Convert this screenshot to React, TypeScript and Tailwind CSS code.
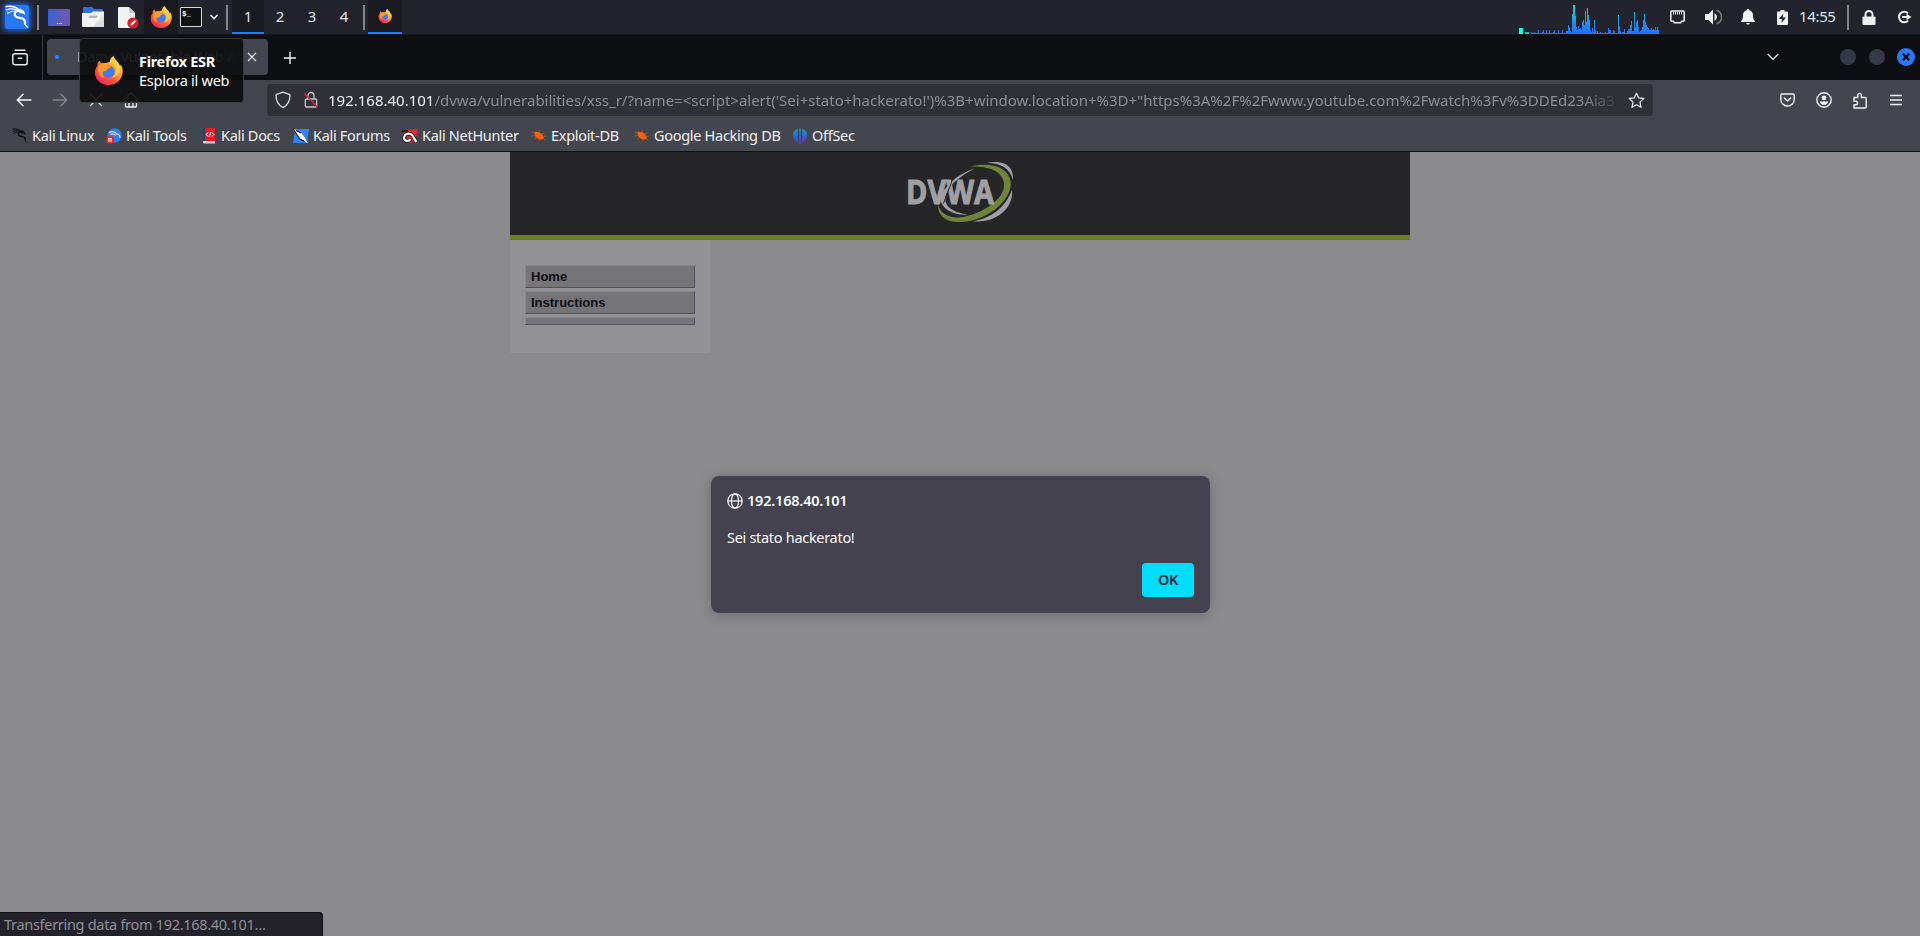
import React from "react";

function FirefoxLogo({ className, id }: { className: string; id: string }) {
  return (
    <svg viewBox="0 0 32 32" className={className}>
      <defs>
        <linearGradient id={id + "a"} x1="0.85" y1="0.1" x2="0.2" y2="0.95">
          <stop offset="0" stopColor="#ffe14d" />
          <stop offset="0.35" stopColor="#ffa436" />
          <stop offset="0.65" stopColor="#ff5a3c" />
          <stop offset="1" stopColor="#f0245e" />
        </linearGradient>
      </defs>
      <path
        d="M4.2 7.2c-.4 1-.5 2.400-.3 3.400C1.500 13.500.6 17 1.300 20.600 2.700 27.300 8.800 32 16 32c8.600 0 15.500-6.600 15.700-15 .1-3.400-1-6-2.700-8 .1 1.200.1 1.700-.2 2.400-.9-3.600-2.600-4.900-4.500-6.800C22.600 3 21.700 1.500 21.500 0c-2.700 1.700-3.800 4.400-4 6.600-1.400.1-2.700.5-3.800 1.100-2.300-.2-4.200-.1-5.400.7-1-.6-1.500-1.700-1.600-3.200-.9.5-1.800 1.100-2.500 2z"
        fill={`url(#${id}a)`}
      />
      <path
        d="M21.500 0c-2.700 1.700-3.800 4.400-4 6.600 3.800.5 6.600 3.600 6.800 7.600.2 5-2.300 8-4.600 9.600 5.500-.9 8.600-4.200 9.100-9.400.2-4.300-2.100-7.300-4.500-9.800C22.600 3 21.700 1.500 21.500 0z"
        fill="#ffd44a"
        opacity="0.75"
      />
      <circle cx="16.300" cy="17" r="6.600" fill="#4479e6" />
      <path
        d="M8.300 8.400c2-.9 4.600-.5 6.300 1 .6.600 2 1.700 4 1.900-.3 2-2.700 2.200-3.700 2.900-1 .8-.6 2.200-2.300 2.500-1 .2-2-.1-2.900.6-1 2.900-.1 5.300 2.300 7.100-4.300-.7-7.500-3.700-7.600-8.400 0-3 .9-5.500 3.900-7.600z"
        fill="#ff9a2e"
      />
    </svg>
  );
}

function KaliDragon({ className }: { className: string }) {
  return (
    <svg viewBox="0 0 24 24" fill="none" stroke="currentColor" strokeLinecap="round" strokeLinejoin="round" className={className}>
      <path d="M1.200 1.600C6 .8 11 2 15.200 5.400" strokeWidth="1.500" />
      <path d="M1.500 4.800C5 3.600 10 3.800 14 5.600" strokeWidth="1.300" />
      <path d="M2.500 8.300C5 6.600 9 5.600 12.500 5.800" strokeWidth="1.100" />
      <path d="M15.500 4.200l2.800 1.600 1.700 3.400-2.600-1.200-2.600-.4-2.300-1.600z" fill="currentColor" strokeWidth="0.800" />
      <path d="M12.500 6C9.300 6.600 8.700 10 11.300 11.800c2 1.400 4.600.9 6.700 2 2.200 1.100 2.200 3.600 2 5.200" strokeWidth="2.200" />
      <path d="M20 18c.2 2 1.200 3.400 2.800 4.300" strokeWidth="1.200" />
    </svg>
  );
}

function PanelDivider({ className }: { className: string }) {
  return (
    <div className={`flex items-center justify-center ${className}`}>
      <div className="h-[25px] w-0.5 bg-[#858589]" />
    </div>
  );
}

const load = [
  2, 1, 1, 2, 1, 1, 1, 4, 1, 1, 1, 2, 4, 1, 1, 4, 1, 1, 4, 1, 1, 1, 2, 4, 1, 1, 1, 4, 1, 1, 1, 4, 1, 1, 1, 3, 3, 9, 7, 3, 2, 20,
  29, 29, 18, 7, 4, 8, 5, 6, 4, 12, 14, 9, 23, 12, 26, 19, 14, 4, 2, 6, 2, 14, 4, 1, 3, 1, 1, 2, 1, 1, 1, 1, 2, 1, 1, 6, 4, 4, 1, 1, 4,
  3, 1, 1, 1, 19, 8, 3, 1, 2, 2, 5, 1, 1, 3, 5, 5, 9, 13, 3, 3, 22, 7, 12, 14, 7, 2, 3, 4, 7, 14, 20, 12, 9, 7, 6, 4, 4, 6, 4, 5,
  4, 7, 4, 7, 4,
];

function LoadGraph() {
  return (
    <svg width="140" height="34" viewBox="0 0 140 34" shapeRendering="crispEdges">
      <defs>
        <linearGradient id="load" gradientUnits="userSpaceOnUse" x1="0" y1="4" x2="0" y2="34">
          <stop offset="0" stopColor="#12e0e0" />
          <stop offset="0.6" stopColor="#1c93f0" />
          <stop offset="1" stopColor="#2a6cfa" />
        </linearGradient>
      </defs>
      <rect x="0" y="28" width="4" height="6" fill="#0fffe0" />
      <rect x="6" y="32" width="4" height="2" fill="#0bcfa8" />
      {load.map((h, i) => (
        <rect key={i} x={12 + i} y={34 - h} width="1" height={h} fill="url(#load)" />
      ))}
    </svg>
  );
}

function Panel() {
  return (
    <header className="flex h-[35px] shrink-0 items-stretch border-b border-[#17181d] bg-[#22232c] text-[15px] text-[#dfe3ea]">
      <div className="flex w-[33px] items-center justify-center">
        <div className="flex size-6 items-center justify-center rounded-[3px] bg-[#2678f5] shadow-[0_0_5px_2px_#1c5fd0]">
          <KaliDragon className="size-6 text-white" />
        </div>
      </div>
      <PanelDivider className="w-[9px]" />
      <div className="flex w-[34px] items-center justify-center">
        <div className="flex h-[17px] w-[22px] items-end justify-center gap-px rounded-[1px] bg-gradient-to-r from-[#3563cf] to-[#7254b4] pb-0.5">
          <div className="size-px bg-white" />
          <div className="size-px bg-white" />
          <div className="size-px bg-white" />
        </div>
      </div>
      <div className="flex w-[34px] items-center justify-center">
        <svg width="22" height="20" viewBox="0 0 22 20">
          <path d="M1 1a1 1 0 0 1 1-1h8l2 2h8a1 1 0 0 1 1 1v4H1z" fill="#2f70e0" />
          <path d="M0 6h9l2-1.500h11V19a1 1 0 0 1-1 1H1a1 1 0 0 1-1-1z" fill="#f2f2f2" />
          <path d="M22 7v12a1 1 0 0 1-1 1H11z" fill="#dedede" />
          <rect x="6.500" y="8.500" width="9" height="2.500" rx="1.200" fill="#b8b8b8" />
        </svg>
      </div>
      <div className="flex w-[34px] items-center justify-center pl-[3px]">
        <svg width="21" height="23" viewBox="0 0 21 23">
          <path d="M0 2a1 1 0 0 1 1-1h10l6 6v15H1a1 1 0 0 1-1-1z" fill="#f2f2f2" />
          <path d="M11 1v6h6z" fill="#c9c9c9" />
          <circle cx="15" cy="17" r="5.600" fill="#d3202a" />
          <path d="M12.500 19.500l.6-1.900 3.700-3.700 1.300 1.300-3.700 3.700z" fill="#fff" />
        </svg>
      </div>
      <div className="flex w-[34px] items-center justify-center bg-[#191a1f]">
        <FirefoxLogo id="dock" className="size-[22px]" />
      </div>
      <div className="flex w-[26px] items-center justify-center">
        <div className="h-5 w-[22px] rounded-[1px] border border-[#d8d8d8] bg-[#101112] pl-px font-['Liberation_Mono'] text-[7.500px]/[12px] font-bold text-white">
          $_
        </div>
      </div>
      <div className="flex w-[19px] items-center justify-center">
        <svg width="10" height="6" viewBox="0 0 10 6" fill="none" stroke="#e8e8ea" strokeWidth="1.700">
          <path d="M1.500 1L5 4.500 8.500 1" />
        </svg>
      </div>
      <PanelDivider className="w-[9px] pr-px" />
      <div className="flex w-8 items-center justify-center border-b-2 border-[#2777ff] bg-[#191b21] pt-px">1</div>
      <div className="flex w-8 items-center justify-center pb-px">2</div>
      <div className="flex w-8 items-center justify-center pb-px">3</div>
      <div className="flex w-8 items-center justify-center pb-px">4</div>
      <PanelDivider className="w-2" />
      <div className="flex w-[34px] items-center justify-center border-b-2 border-[#2777ff] bg-[#191b21]">
        <FirefoxLogo id="task" className="size-[14px]" />
      </div>
      <div className="flex-1" />
      <LoadGraph />
      <div className="ml-px flex w-[35px] items-center justify-center">
        <svg width="15" height="14" viewBox="0 0 15 14" fill="none" stroke="#ededed">
          <path d="M1.800 1h11.400a1 1 0 0 1 1 1v8.200a1 1 0 0 1-1 1h-1.700l-.8 1.600H4.300l-.8-1.600H1.800a1 1 0 0 1-1-1V2a1 1 0 0 1 1-1z" strokeWidth="1.600" />
          <path d="M3.500 2v2.500M5.500 2v2.500M7.500 2v2.500M9.500 2v2.500M11.500 2v2.500" />
        </svg>
      </div>
      <div className="flex w-[35px] items-center justify-center pl-px">
        <svg width="17" height="16" viewBox="0 0 17 16" fill="none">
          <path d="M0 5h3.500L8 .5v15L3.500 11H0z" fill="#f0f0f0" />
          <path d="M9.500 4a4.500 4.500 0 0 1 0 8z" fill="#f0f0f0" />
          <path d="M11.500 1.300a7 7 0 0 1 0 13.400" stroke="#77787e" strokeWidth="1.500" />
        </svg>
      </div>
      <div className="flex w-[35px] items-center justify-center">
        <svg width="14" height="16" viewBox="0 0 14 16" fill="#f0f0f0">
          <path d="M7 0c.9 0 1.400.6 1.400 1.300C11 2 12 4.200 12 6.500c0 3 .7 4.500 2 5.500v1H0v-1c1.300-1 2-2.500 2-5.500C2 4.200 3 2 5.600 1.300 5.600.6 6.100 0 7 0zM5.200 14h3.600c-.2 1-.9 1.600-1.800 1.600S5.400 15 5.200 14z" />
        </svg>
      </div>
      <div className="flex w-[34px] items-center justify-center">
        <svg width="11" height="15" viewBox="0 0 11 15">
          <path d="M3.500 0h4v1.500H10a1 1 0 0 1 1 1V14a1 1 0 0 1-1 1H1a1 1 0 0 1-1-1V2.500a1 1 0 0 1 1-1h2.500z" fill="#f0f0f0" />
          <path d="M6.300 3.500L2 9h3l-.5 4L9 7.500H5.800z" fill="#22232c" />
        </svg>
      </div>
      <div className="flex w-10 items-center pb-px tracking-[-0.35px]">14:55</div>
      <PanelDivider className="w-[17px]" />
      <div className="flex w-[26px] items-center justify-center">
        <svg width="14" height="15" viewBox="0 0 14 15">
          <rect x="0.500" y="6.500" width="13" height="8.500" rx="1" fill="#f0f0f0" />
          <path d="M3.500 7V4.500a3.500 3.500 0 0 1 7 0V7" fill="none" stroke="#f0f0f0" strokeWidth="2" />
        </svg>
      </div>
      <div className="flex w-[38px] items-center justify-center pl-1.5">
        <svg width="15" height="14" viewBox="0 0 15 14" fill="none" stroke="#f0f0f0" strokeWidth="2">
          <path d="M11 3.200A5.300 5.300 0 1 0 11 10.800M5 7h6" />
          <path d="M9.500 3.700L14.500 7l-5 3.300z" fill="#f0f0f0" stroke="none" />
        </svg>
      </div>
    </header>
  );
}

function TabBar() {
  return (
    <div className="flex h-[45px] shrink-0 bg-[#0e0f13]">
      <div className="flex w-[43px] items-center border-r border-[#3a3b42] pl-3">
        <svg width="16" height="17" viewBox="0 0 16 17" fill="none" stroke="#f0f0f2" strokeWidth="1.400" strokeLinecap="round" className="mb-px">
          <path d="M3 1.200h10" />
          <path d="M2.800 4.700h10.400a2 2 0 0 1 2 2v7a2 2 0 0 1-2 2H2.800a2 2 0 0 1-2-2v-7a2 2 0 0 1 2-2z" />
          <path d="M6.300 9.300h3.400" />
        </svg>
      </div>
      <div className="mt-1 ml-1 flex h-9 w-[221px] items-center rounded bg-[#44464f] pl-2">
        <div className="size-1 rounded-full bg-[#1a8bff]" />
        <div className="ml-[18px] w-[164px] overflow-hidden text-[14.500px] tracking-[-0.3px] whitespace-nowrap text-[#c9cace] [mask-image:linear-gradient(to_left,transparent,black_24px)]">
          Damn Vulnerable Web App
        </div>
        <svg width="10" height="10" viewBox="0 0 10 10" stroke="#e8e8ec" strokeWidth="1.200" className="ml-[6px]">
          <path d="M1 1l8 8M9 1l-8 8" />
        </svg>
      </div>
      <svg width="14" height="14" viewBox="0 0 14 14" stroke="#f4f4f6" strokeWidth="1.400" className="mt-4 ml-[15px]">
        <path d="M7 1v12M1 7h12" />
      </svg>
      <div className="flex-1" />
      <div className="flex items-start pt-[13px]">
        <svg width="12" height="8" viewBox="0 0 12 8" fill="none" stroke="#e8e8ec" strokeWidth="1.300" className="mt-[5px]">
          <path d="M.7 1L6 6.300 11.300 1" />
        </svg>
        <div className="mt-px ml-[61px] size-4 rounded-full bg-[#363a47]" />
        <div className="mt-px ml-[13px] size-4 rounded-full bg-[#363a47]" />
        <div className="mr-[5px] ml-3 flex size-[18px] items-center justify-center rounded-full bg-[#2777ff]">
          <svg width="8" height="8" viewBox="0 0 8 8" stroke="#0b0c10" strokeWidth="2.200">
            <path d="M.8.8l6.400 6.400M7.200.8L.8 7.200" />
          </svg>
        </div>
      </div>
    </div>
  );
}

function NavBar() {
  return (
    <div className="flex h-10 shrink-0 items-center">
      <div className="flex w-[267px] items-center pl-4">
        <svg width="16" height="14" viewBox="0 0 16 14" fill="none" stroke="#f4f4f6" strokeWidth="1.400" strokeLinecap="round">
          <path d="M15 7H1.500M7 1.300L1.300 7 7 12.700" />
        </svg>
        <svg width="16" height="14" viewBox="0 0 16 14" fill="none" stroke="#86878d" strokeWidth="1.400" strokeLinecap="round" className="ml-5">
          <path d="M1 7h13.500M9 1.300L14.700 7 9 12.700" />
        </svg>
        <svg width="14" height="14" viewBox="0 0 14 14" fill="none" stroke="#f4f4f6" strokeWidth="1.300" className="ml-[21px]">
          <path d="M1 1l12 12M13 1L1 13" />
        </svg>
        <svg width="16" height="16" viewBox="0 0 16 16" fill="none" stroke="#f4f4f6" strokeWidth="1.300" className="ml-[20px]">
          <path d="M1 7.500L8 1l7 6.500M2.500 6.500V14a1 1 0 0 0 1 1h9a1 1 0 0 0 1-1V6.500M6 15v-4a1 1 0 0 1 1-1h2a1 1 0 0 1 1 1v4" />
        </svg>
      </div>
      <div className="flex h-8 w-[1386px] items-center rounded bg-[#303136] pl-2">
        <svg width="16" height="18" viewBox="0 0 16 18" fill="none" stroke="#dcdcdf" strokeWidth="1.300" strokeLinejoin="round">
          <path d="M8 1.200l6.300 2.200c.5.200.7.500.7.900 0 5.400-2.600 10-7 12.300C3.600 14.300 1 9.700 1 4.300c0-.4.200-.7.700-.9z" />
        </svg>
        <svg width="16" height="18" viewBox="0 0 16 18" fill="none" className="ml-3">
          <path d="M3.500 8h9a1.200 1.200 0 0 1 1.200 1.200v5.600a1.200 1.200 0 0 1-1.200 1.200h-9a1.200 1.200 0 0 1-1.200-1.200V9.200A1.200 1.200 0 0 1 3.500 8zM5 8V4.500a3 3 0 0 1 6 0V8" stroke="#c8c8cc" strokeWidth="1.300" />
          <path d="M1.500 2.500l13 13.500" stroke="#e22850" strokeWidth="1.400" />
        </svg>
        <div className="ml-[9px] w-[1293px] overflow-hidden text-[15px] tracking-[-0.003px] whitespace-nowrap text-[#8d8e93] [mask-image:linear-gradient(to_left,transparent,black_40px)]">
          <span className="text-[#f2f2f4]">192.168.40.101</span>
          {"/dvwa/vulnerabilities/xss_r/?name=<script>alert('Sei+stato+hackerato!')%3B+window.location+%3D+\"https%3A%2F%2Fwww.youtube.com%2Fwatch%3Fv%3DDEd23Aia3"}
        </div>
        <svg width="17" height="17" viewBox="0 0 17 17" fill="none" stroke="#e4e4e7" strokeWidth="1.300" strokeLinejoin="round" className="ml-[7px]">
          <path d="M8.500 1.200l2.200 4.700 5 .6-3.700 3.600 1 5.200-4.500-2.600L4 15.300l1-5.200L1.300 6.500l5-.6z" />
        </svg>
      </div>
      <div className="flex flex-1 items-center justify-end pr-[17px]">
        <svg width="15" height="14" viewBox="0 0 15 14" fill="none" stroke="#f0f0f2" strokeWidth="1.400" strokeLinecap="round" strokeLinejoin="round">
          <path d="M2 1h11a1.200 1.200 0 0 1 1.200 1.200v4A6.600 6.600 0 0 1 7.500 13 6.600 6.600 0 0 1 .8 6.200v-4A1.200 1.200 0 0 1 2 1zM4.300 5l3.200 3 3.200-3" />
        </svg>
        <svg width="16" height="16" viewBox="0 0 16 16" fill="none" className="ml-[21px]">
          <circle cx="8" cy="8" r="7.200" stroke="#f0f0f2" strokeWidth="1.400" />
          <circle cx="8" cy="5.800" r="2.400" fill="#f0f0f2" />
          <path d="M3.800 9.500h8.400c-.5 2.200-2 3.500-4.200 3.500s-3.700-1.300-4.200-3.500z" fill="#f0f0f2" />
        </svg>
        <svg width="16" height="17" viewBox="0 0 16 17" fill="none" stroke="#f0f0f2" strokeWidth="1.400" strokeLinejoin="round" className="ml-5">
          <path d="M2 5.500h3.800V3.200a1.800 1.800 0 0 1 3.600 0v2.300h3.800a1 1 0 0 1 1 1V15a1 1 0 0 1-1 1H2v-3.200h1.800a1.700 1.700 0 0 0 0-3.600H2z" />
        </svg>
        <svg width="14" height="12" viewBox="0 0 14 12" stroke="#f0f0f2" strokeWidth="1.300" className="ml-[21px]">
          <path d="M1 1.500h12M1 6h12M1 10.500h12" />
        </svg>
      </div>
    </div>
  );
}

function Bug() {
  return (
    <svg width="16" height="16" viewBox="0 0 16 16">
      <path d="M4 3.800c2.500-.6 5.500.4 7 2.400 1.500 2 2.300 3.900 1.500 4.600-1.500 1.200-5 .8-7-1C3.700 8 2.700 5 4 3.800z" fill="#f0620f" />
      <path d="M4 5L1 4.500M4 7.500L.5 8M5.500 9.500L3 11M8 4l.5-2M11 6l2.500-1M12 8.500l3.500-.5M9 11l-.5 2M12.300 10.500l1.700 1.700" stroke="#b9541c" strokeWidth="0.900" />
    </svg>
  );
}

const bookmarks = [
  {
    label: "Kali Linux",
    width: "w-[94px]",
    icon: <KaliDragon className="size-4 text-[#0c0c0e]" />,
  },
  {
    label: "Kali Tools",
    width: "w-[95px]",
    icon: (
      <svg width="16" height="16" viewBox="0 0 16 16" fill="none">
        <circle cx="8.500" cy="7.500" r="7.200" fill="#2f7bef" />
        <path d="M3 4.500c3-1.700 7-.8 7.500 1.500 2.500 0 3.500 1.800 3.500 4M4.500 6.500c2-1 4-.5 5 1" stroke="#dfeaff" strokeWidth="1.200" />
        <circle cx="4" cy="11.700" r="4" fill="#e02a30" />
        <path d="M2 10.500h4M3 10.500V14M5 10.500V14" stroke="#fff" />
      </svg>
    ),
  },
  {
    label: "Kali Docs",
    width: "w-[92px]",
    icon: (
      <svg width="16" height="16" viewBox="0 0 16 16" fill="none">
        <path d="M2 1.500A1.500 1.500 0 0 1 3.500 0H14v13H2z" fill="#e01b22" />
        <path d="M2 1.500A1.500 1.500 0 0 1 3.500 0H4v13H2z" fill="#283a80" />
        <path d="M2 13h12v2.500H3.500A1.500 1.500 0 0 1 2 14z" fill="#d9cfcf" />
        <path d="M7 4.500L5.200 6.500 7 8.500M11 4.500l1.800 2L11 8.500M9.700 4L8.300 9" stroke="#fff" />
      </svg>
    ),
  },
  {
    label: "Kali Forums",
    width: "w-[109px]",
    icon: (
      <svg width="16" height="16" viewBox="0 0 16 16">
        <path d="M2 1h14l-2 14H0z" fill="#2a84f5" />
        <path d="M1 1l4.500 2.500 3 1.500 3.500 5 3 5.500-4.500-3-4-1.500-2.500-4z" fill="#fff" />
        <path d="M0 .5l4.500 7 2.500 3.500 4.500 2.500M3 2.500L8 5" stroke="#15161a" strokeWidth="1.100" fill="none" />
      </svg>
    ),
  },
  {
    label: "Kali NetHunter",
    width: "w-[129px]",
    icon: (
      <svg width="16" height="16" viewBox="0 0 16 16">
        <path d="M2 2l14-1-3 13-6 1z" fill="#e5252e" />
        <path d="M0 3h6" stroke="#111" strokeWidth="1.500" />
        <path d="M2 9.500C2.500 6 6 5 8.500 6c3 1.200 3.500 5 6 8M2 9.500c0 4 5 4.500 6.500 1.500" stroke="#111" strokeWidth="3.800" fill="none" />
        <path d="M2 9.500C2.500 6 6 5 8.500 6c3 1.200 3.500 5 6 8M2 9.500c0 4 5 4.500 6.500 1.500" stroke="#fff" strokeWidth="2.200" fill="none" />
      </svg>
    ),
  },
  { label: "Exploit-DB", width: "w-[103px]", icon: <Bug /> },
  { label: "Google Hacking DB", width: "w-[158px]", icon: <Bug /> },
  {
    label: "OffSec",
    width: "w-[80px]",
    icon: (
      <svg width="16" height="16" viewBox="0 0 16 16">
        <defs>
          <linearGradient id="offsec" gradientUnits="userSpaceOnUse" x1="0" y1="0" x2="0" y2="16">
            <stop offset="0" stopColor="#14a3b0" />
            <stop offset="0.5" stopColor="#2b66d8" />
            <stop offset="1" stopColor="#7a22e6" />
          </linearGradient>
        </defs>
        <path d="M5.800 1v13C3 13 .8 10.800.8 7.300S3 1.700 5.800 1zM10.200 1v13c2.800-1 5-3.200 5-6.700s-2.200-5.600-5-6.300zM7.300.500h1.400V16H7.300z" fill="url(#offsec)" />
      </svg>
    ),
  },
];

function Bookmarks() {
  return (
    <div className="flex h-[31px] shrink-0 items-center pl-3 text-[14.500px]/[20px] tracking-[-0.3px] text-[#f0f0f2]">
      {bookmarks.map((b) => (
        <div key={b.label} className={`flex shrink-0 items-center gap-1 whitespace-nowrap ${b.width}`}>
          {b.icon}
          <span className="-mt-px">{b.label}</span>
        </div>
      ))}
    </div>
  );
}

function DvwaLogo() {
  return (
    <svg width="140" height="75" viewBox="0 0 420 225">
      <path d="M290 23C330 16 372 22 369 76 360 40 335 25 290 23z" fill="#a0a0a2" />
      <path d="M366 104C372 150 330 205 246 199 310 190 350 150 366 104z" fill="#a0a0a2" />
      <path d="M238 35C300 20 355 35 362 80 368 130 300 195 215 201 165 204 142 180 144 148 152 178 180 192 220 186 280 175 348 130 342 85 336 45 290 33 238 35z" fill="#70833a" />
      <path d="M256 40C205 55 160 95 152 130 150 160 190 182 234 180 195 172 165 160 166 130 168 100 205 65 256 40z" fill="#a0a0a2" />
      <text
        x="48"
        y="146"
        textLength="264"
        lengthAdjust="spacingAndGlyphs"
        className="fill-[#a0a0a2] stroke-[#a0a0a2] font-['Open_Sans'] text-[100px] font-bold"
        strokeWidth="3"
      >
        DVWA
      </text>
      <path d="M186 78L160 146" stroke="#262628" strokeWidth="3" />
    </svg>
  );
}

const itemClass =
  "border border-t-[#88888a] border-r-[#4f5161] border-b-[#4f5161] border-l-[#88888a] bg-[#757577] pl-[5px] text-[13px]/[21px] font-bold text-[#0e0e10]";

function Page() {
  return (
    <main className="flex flex-1 flex-col items-center bg-[#8b8b8d]">
      <div className="w-[900px] font-['Liberation_Sans']">
        <div className="flex h-[88px] justify-center border-b-[5px] border-[#6a7e27] bg-[#262628] pt-[3px]">
          <DvwaLogo />
        </div>
        <nav className="flex h-[113px] w-[200px] flex-col gap-[3px] bg-[#929294] px-[15px] pt-[25px]">
          <div className={`h-[23px] ${itemClass}`}>Home</div>
          <div className={`h-[23px] ${itemClass}`}>Instructions</div>
          <div className={`h-2 ${itemClass}`} />
        </nav>
      </div>
    </main>
  );
}

export default function App() {
  return (
    <div className="relative flex h-[936px] w-[1920px] flex-col overflow-hidden font-['Noto_Sans',sans-serif]">
      <Panel />
      <TabBar />
      <div className="flex h-[72px] shrink-0 flex-col border-b border-[#0f1014] bg-[#44464f]">
        <NavBar />
        <Bookmarks />
      </div>
      <Page />

      <div className="absolute top-[38px] left-[79px] flex h-[65px] w-[165px] items-center rounded border border-[#3c3c40] bg-[#0c0c0c]/90 pl-[14px] text-[14.500px]/[19px] tracking-[-0.25px] text-white">
        <FirefoxLogo id="tip" className="size-[29px] shrink-0" />
        <div className="ml-[16px] whitespace-nowrap">
          <div className="font-bold tracking-[-0.3px]">Firefox ESR</div>
          <div>Esplora il web</div>
        </div>
      </div>

      <div className="absolute top-[476px] left-[711px] flex h-[137px] w-[499px] flex-col rounded-lg bg-[#44424e] px-4 pt-[14px] text-[14.500px]/[20px] tracking-[-0.3px] text-[#fbfbfe] shadow-[0_2px_14px_rgba(0,0,0,0.22)]">
        <div className="flex items-center gap-1 font-semibold tracking-[-0.2px]">
          <svg width="16" height="16" viewBox="0 0 16 16" fill="none" stroke="#fbfbfe" strokeWidth="1.200" className="mt-0.5">
            <circle cx="8" cy="8" r="7.200" />
            <ellipse cx="8" cy="8" rx="3.600" ry="7.200" />
            <path d="M.8 8h14.400" />
          </svg>
          <span>192.168.40.101</span>
        </div>
        <div className="mt-[17px]">Sei stato hackerato!</div>
        <button className="mt-4 h-[34px] w-[52px] self-end rounded bg-[#00ddff] pb-0.5 font-semibold text-[#2b2a33]">OK</button>
      </div>

      <div className="absolute bottom-0 left-0 h-6 w-[323px] rounded-tr border-t border-r border-[#0f0f14] bg-[#23222b] pl-1 text-[14.500px]/[22px] tracking-[-0.3px] text-[#8f8f96]">
        Transferring data from 192.168.40.101…
      </div>
    </div>
  );
}
